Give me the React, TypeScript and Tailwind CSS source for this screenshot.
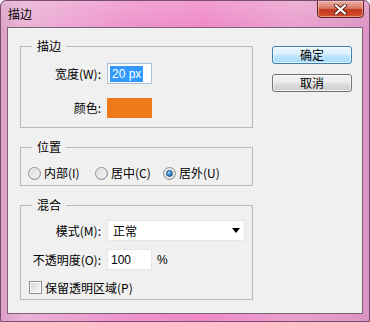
import React from 'react'

const cjk = "font-['Noto_Sans_CJK_SC','Noto_Sans_CJK_JP',sans-serif]"

function Radio({ checked }: { checked?: boolean }) {
  return (
    <span className="relative flex h-[13px] w-[13px] shrink-0 items-center justify-center rounded-full border border-[#8f8f8f] bg-[radial-gradient(circle_at_40%_35%,#ffffff,#e4e4e4_60%,#c9c9c9)]">
      <span className="h-[9px] w-[9px] rounded-full bg-[linear-gradient(135deg,#dcdcdc,#f6f6f6)]" />
      {checked && (
        <span className="absolute left-[2px] top-[2px] h-[7px] w-[7px] rounded-full border border-[#1b4f7e] bg-[radial-gradient(circle_at_35%_30%,#9fd6ff,#2d8ad6_55%,#0b4d8f)]" />
      )}
    </span>
  )
}

function Group({ title, className, children }: { title: string; className: string; children: React.ReactNode }) {
  return (
    <div className={`relative w-[233px] border border-[#b9b9b9] ${className}`}>
      <span className="absolute -top-[9px] left-[11px] bg-[#f0f0f0] px-[5px] text-[12px] leading-[16px] text-black">
        {title}
      </span>
      {children}
    </div>
  )
}

export default function App() {
  return (
    <div
      className={`relative h-[322px] w-[370px] overflow-hidden rounded-t-[6px] border border-[#7a4f6d] bg-[linear-gradient(180deg,rgba(255,255,255,0.18),rgba(255,255,255,0)_9%),linear-gradient(90deg,#dda0c8,#eab1d6_6%,#ee92cb_35%,#ef88c8_55%,#e9a0cd_80%,#dc94c4)] ${cjk}`}
    >
      {/* title bar */}
      <div className="flex h-[26px] items-center pl-[7px] text-[12px] text-black">描边</div>

      {/* close button */}
      <div className="absolute right-[5px] top-[-1px] flex h-[18px] w-[47px] items-center justify-center rounded-b-[4px] border border-[#5a2626] bg-[linear-gradient(180deg,#eab0a6,#d97a68_45%,#c2371f_55%,#d9502f)] shadow-[inset_0_0_0_1px_rgba(255,220,210,0.5)]">
        <svg width="15" height="11" viewBox="0 0 15 11">
          <path d="M3 1.5 L12 9.5 M12 1.5 L3 9.5" stroke="#5a1f1a" strokeWidth="4" strokeLinecap="round" />
          <path d="M3 1.5 L12 9.5 M12 1.5 L3 9.5" stroke="#ffffff" strokeWidth="2.2" strokeLinecap="round" />
        </svg>
      </div>

      {/* client area */}
      <div className="mx-[6px] flex h-[287px] border border-[#7d6474] bg-[#f0f0f0] text-[12px] text-black">
        <div className="flex flex-col gap-[19px] pl-[12px] pt-[18px]">
          <Group title="描边" className="h-[82px] pt-[16px]">
            <div className="flex h-[21px] items-center">
              <span className="w-[80px] text-right">宽度(W):</span>
              <div className="ml-[6px] flex h-[21px] w-[45px] items-center border border-[#a9c3dd] bg-white pl-[2px]">
                <span className="h-[16px] bg-[#3399ff] px-[2px] font-['Liberation_Sans',sans-serif] text-[12px] leading-[16px] text-white">
                  20 px
                </span>
              </div>
            </div>
            <div className="mt-[14px] flex h-[20px] items-center">
              <span className="w-[80px] text-right">颜色:</span>
              <div className="ml-[6px] h-[20px] w-[45px] bg-[#ef7a1a]" />
            </div>
          </Group>

          <Group title="位置" className="h-[39px] pt-[17px]">
            <div className="flex h-[16px] items-center pl-[7px]">
              <label className="flex w-[67px] items-center gap-[3px]">
                <Radio />
                <span>内部(I)</span>
              </label>
              <label className="flex w-[68px] items-center gap-[3px]">
                <Radio />
                <span>居中(C)</span>
              </label>
              <label className="flex items-center gap-[3px]">
                <Radio checked />
                <span>居外(U)</span>
              </label>
            </div>
          </Group>

          <Group title="混合" className="h-[95px] pt-[14px]">
            <div className="flex h-[21px] items-center">
              <span className="w-[80px] text-right">模式(M):</span>
              <div className="ml-[6px] flex h-[21px] w-[138px] items-center justify-between border border-[#e6e6e6] bg-white pl-[5px] pr-[4px]">
                <span>正常</span>
                <svg width="8" height="5" viewBox="0 0 8 5">
                  <path d="M0 0 H8 L4 5 Z" fill="#000" />
                </svg>
              </div>
            </div>
            <div className="mt-[8px] flex h-[21px] items-center">
              <span className="w-[80px] whitespace-nowrap text-right">不透明度(O):</span>
              <div className="ml-[6px] flex h-[21px] w-[45px] items-center border border-[#e6e6e6] bg-white pl-[3px] font-['Liberation_Sans',sans-serif]">
                100
              </div>
              <span className="ml-[5px] font-['Liberation_Sans',sans-serif]">%</span>
            </div>
            <label className="mt-[11px] flex h-[13px] items-center gap-[3px] pl-[8px]">
              <span className="flex h-[13px] w-[13px] items-center justify-center border border-[#8e8f8f] bg-white">
                <span className="h-[9px] w-[9px] bg-[linear-gradient(135deg,#d6d6d6,#f7f7f7)]" />
              </span>
              <span>保留透明区域(P)</span>
            </label>
          </Group>
        </div>

        <div className="ml-[19px] flex flex-col gap-[10px] pt-[18px]">
          <button className="flex h-[18px] w-[80px] items-center justify-center rounded-[3px] border border-[#3c7fb1] bg-[linear-gradient(180deg,#eaf6fd,#d9f0fc_45%,#bee6fd_55%,#a7d9f5)] text-[12px] shadow-[inset_0_0_0_1px_rgba(255,255,255,0.7)]">
            确定
          </button>
          <button className="flex h-[18px] w-[80px] items-center justify-center rounded-[3px] border border-[#707070] bg-[linear-gradient(180deg,#f2f2f2,#ebebeb_45%,#dddddd_55%,#cfcfcf)] text-[12px] shadow-[inset_0_0_0_1px_rgba(255,255,255,0.7)]">
            取消
          </button>
        </div>
      </div>
    </div>
  )
}
